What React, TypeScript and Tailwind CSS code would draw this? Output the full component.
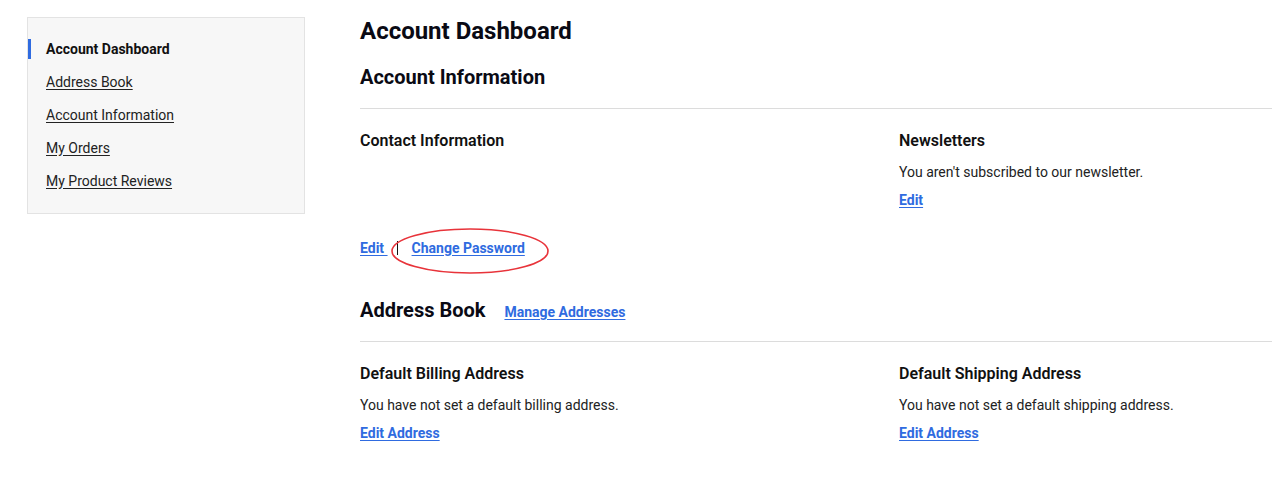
import React from 'react';

const font = { fontFamily: 'Roboto, "Liberation Sans", sans-serif' };

const navItems = ['Address Book', 'Account Information', 'My Orders', 'My Product Reviews'];

const Link: React.FC<{ children: React.ReactNode }> = ({ children }) => (
    <a href="#" className="text-[14px] font-bold text-[#2f6be0] underline underline-offset-2 whitespace-pre">
        {children}
    </a>
);

const App: React.FC = () => {
    return (
        <div className="flex w-[1272px] h-[481px] overflow-hidden bg-white text-[#111]" style={font}>
            {/* Sidebar */}
            <div className="pl-[27px] pt-[17px] w-[360px] shrink-0">
                <div className="w-[278px] bg-[#f7f7f7] border border-[#e3e3e3] pt-[21px] pb-[22px]">
                    <div className="flex items-center h-[20px] border-l-[3px] border-[#2f6be0] pl-[15px]">
                        <span className="text-[14px] font-bold">Account Dashboard</span>
                    </div>
                    {navItems.map((item) => (
                        <div key={item} className="mt-[13px] h-[20px] flex items-center pl-[18px]">
                            <a href="#" className="text-[14px] text-[#222] underline underline-offset-2">{item}</a>
                        </div>
                    ))}
                </div>
            </div>

            {/* Main */}
            <div className="w-[1078px] shrink-0 pt-[14px]">
                <h1 className="text-[24px] font-bold leading-[34px] text-[#0a0a14]">Account Dashboard</h1>
                <h2 className="mt-[15px] text-[20px] font-bold leading-[28px] text-[#0a0a14]">Account Information</h2>
                <div className="mt-[17px] border-t border-[#dcdcdc]" />

                <div className="grid grid-cols-2 mt-[21px]">
                    <div className="relative">
                        <h3 className="text-[16px] font-semibold leading-[22px]">Contact Information</h3>
                        <div className="h-[86px]" />
                        <div className="flex items-center h-[20px]">
                            <Link>{'Edit '}</Link>
                            <span className="ml-[9px] mr-[14px] h-[14px] border-l border-[#111]" />
                            <Link>Change Password</Link>
                        </div>
                        {/* red annotation */}
                        <svg className="absolute left-[29px] top-[97px]" width="162" height="48" viewBox="0 0 162 48">
                            <ellipse cx="81" cy="24" rx="78" ry="22" fill="none" stroke="#e8333a" strokeWidth="1.6" />
                        </svg>
                    </div>
                    <div>
                        <h3 className="text-[16px] font-semibold leading-[22px]">Newsletters</h3>
                        <p className="mt-[10px] text-[14px] leading-[20px] text-[#222]">You aren't subscribed to our newsletter.</p>
                        <div className="mt-[8px] h-[20px] flex items-center">
                            <Link>Edit</Link>
                        </div>
                    </div>
                </div>

                <div className="flex items-center mt-[38px] h-[28px]">
                    <h2 className="text-[20px] font-bold text-[#0a0a14]">Address Book</h2>
                    <span className="ml-[19px] mt-[4px]">
                        <Link>Manage Addresses</Link>
                    </span>
                </div>
                <div className="mt-[17px] border-t border-[#dcdcdc]" />

                <div className="grid grid-cols-2 mt-[21px]">
                    <div>
                        <h3 className="text-[16px] font-semibold leading-[22px]">Default Billing Address</h3>
                        <p className="mt-[10px] text-[14px] leading-[20px] text-[#222]">You have not set a default billing address.</p>
                        <div className="mt-[8px] h-[20px] flex items-center">
                            <Link>Edit Address</Link>
                        </div>
                    </div>
                    <div>
                        <h3 className="text-[16px] font-semibold leading-[22px]">Default Shipping Address</h3>
                        <p className="mt-[10px] text-[14px] leading-[20px] text-[#222]">You have not set a default shipping address.</p>
                        <div className="mt-[8px] h-[20px] flex items-center">
                            <Link>Edit Address</Link>
                        </div>
                    </div>
                </div>
            </div>
        </div>
    );
};

export default App;
